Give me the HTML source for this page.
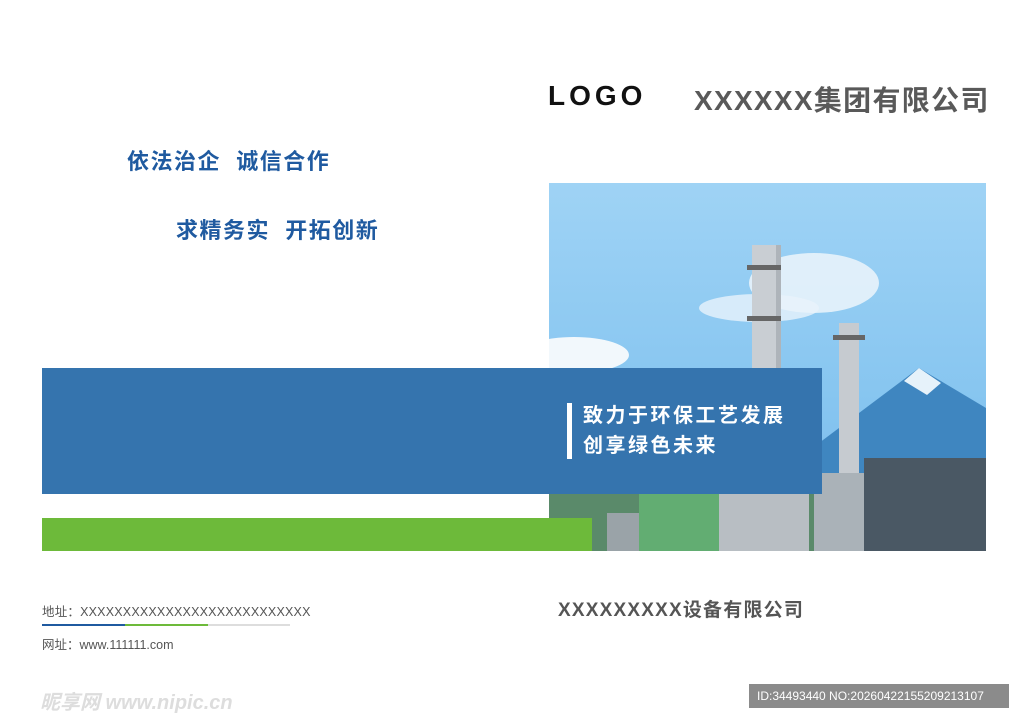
<!DOCTYPE html>
<html><head><meta charset="utf-8"><style>
*{margin:0;padding:0;box-sizing:border-box}
body{width:1024px;height:724px;background:#fff;position:relative;overflow:hidden;font-family:"Liberation Sans","Noto Sans CJK SC",sans-serif}
.a{position:absolute;white-space:nowrap}
</style></head><body>
<div class="a" style="left:548px;top:80px;font-size:28px;font-weight:bold;letter-spacing:4px;color:#111">LOGO</div>
<div class="a" style="left:694px;top:79px;font-size:28px;font-weight:bold;color:#595959;letter-spacing:1.3px">XXXXXX集团有限公司</div>
<div class="a" style="left:127px;top:144px;font-size:22px;font-weight:bold;color:#1f5aa0;letter-spacing:1.5px">依法治企&nbsp; 诚信合作</div>
<div class="a" style="left:176px;top:213px;font-size:22px;font-weight:bold;color:#1f5aa0;letter-spacing:1.5px">求精务实&nbsp; 开拓创新</div>

<div class="a" style="left:549px;top:183px;width:437px;height:368px;overflow:hidden;background:linear-gradient(#9fd3f5,#86c5f0 60%,#7ab9ea)">
<svg width="437" height="368" style="position:absolute;left:0;top:0">
<ellipse cx="265" cy="100" rx="65" ry="30" fill="#e8f3fb" opacity=".9"/>
<ellipse cx="210" cy="125" rx="60" ry="14" fill="#e8f3fb" opacity=".8"/>
<ellipse cx="25" cy="172" rx="55" ry="18" fill="#f2f8fc"/>
<polygon points="270,260 370,185 437,225 437,368 270,368" fill="#3f86c0"/>
<polygon points="355,198 370,185 392,200 378,212" fill="#e6f2fa"/>
<rect x="0" y="310" width="437" height="58" fill="#5a8a6a"/>
<rect x="90" y="310" width="80" height="58" fill="#62ad72"/>
<rect x="203" y="62" width="24" height="306" fill="#c9ced3"/>
<rect x="227" y="62" width="5" height="130" fill="#aeb4ba"/>
<rect x="198" y="82" width="34" height="5" fill="#666"/>
<rect x="198" y="133" width="34" height="5" fill="#666"/>
<rect x="290" y="140" width="20" height="228" fill="#c6cbd0"/>
<rect x="284" y="152" width="32" height="5" fill="#666"/>
<rect x="315" y="275" width="122" height="93" fill="#4a5864"/>
<rect x="265" y="290" width="50" height="78" fill="#aab2b8"/>
<rect x="170" y="300" width="90" height="68" fill="#b8bec3"/>
<rect x="58" y="330" width="32" height="38" fill="#9aa3a8"/>
</svg></div>

<div class="a" style="left:42px;top:368px;width:780px;height:126px;background:#3574ae"></div>
<div class="a" style="left:567px;top:403px;width:5px;height:56px;background:#fff"></div>
<div class="a" style="left:583px;top:401px;font-size:20px;font-weight:bold;color:#fff;line-height:30px;letter-spacing:2.5px">致力于环保工艺发展<br>创享绿色未来</div>
<div class="a" style="left:42px;top:518px;width:550px;height:33px;background:#6dba3a"></div>

<div class="a" style="left:42px;top:601px;font-size:12.5px;color:#555;letter-spacing:0.2px">地址：XXXXXXXXXXXXXXXXXXXXXXXXXXX</div>
<div class="a" style="left:42px;top:624px;width:248px;height:2px;background:#ddd"></div>
<div class="a" style="left:42px;top:624px;width:83px;height:2px;background:#1f5aa0"></div>
<div class="a" style="left:125px;top:624px;width:83px;height:2px;background:#6dba3a"></div>
<div class="a" style="left:42px;top:634px;font-size:12.5px;color:#555">网址：www.111111.com</div>
<div class="a" style="left:558px;top:595px;font-size:19px;font-weight:bold;color:#555;letter-spacing:1.2px">XXXXXXXXX设备有限公司</div>

<div class="a" style="left:40px;top:686px;font-size:20px;font-style:italic;color:#ddd;font-weight:bold">昵享网 www.nipic.cn</div>
<div class="a" style="left:749px;top:684px;width:260px;height:24px;background:#777;opacity:.85;color:#fff;font-size:12px;line-height:24px;padding-left:8px">ID:34493440 NO:20260422155209213107</div>
</body></html>
